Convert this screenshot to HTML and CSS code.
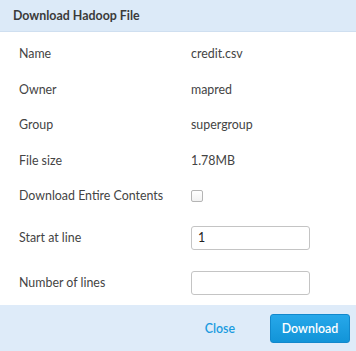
FILE: index.html
```html
<!DOCTYPE html>
<html lang="en">
<head>
  <meta charset="UTF-8"><title>Download Hadoop File</title>
  <link rel="stylesheet" href="styles.css">
</head>
<body>
  <div class="dialog">
    <header class="dlg-head">Download Hadoop File</header>

    <div class="dlg-body">
      <div class="row"><span class="label">Name</span><span class="value">credit.csv</span></div>
      <div class="row"><span class="label">Owner</span><span class="value">mapred</span></div>
      <div class="row"><span class="label">Group</span><span class="value">supergroup</span></div>
      <div class="row"><span class="label">File size</span><span class="value">1.78MB</span></div>
      <div class="row"><span class="label">Download Entire Contents</span><span class="value"><input type="checkbox" class="chk"></span></div>
      <div class="row row-input first-input"><span class="label">Start at line</span><input type="text" class="txt" value="1"></div>
      <div class="row row-input"><span class="label">Number of lines</span><input type="text" class="txt"></div>
    </div>

    <footer class="dlg-foot">
      <button class="btn-link">Close</button>
      <button class="btn-primary">Download</button>
    </footer>
  </div>
</body>
</html>
```

FILE: styles.css
```css
* { margin:0; padding:0; box-sizing:border-box; }
body { font-family:'Lato','Open Sans',sans-serif; background:#fff; color:#444; width:356px; height:351px; overflow:hidden; }

.dialog { width:356px; height:351px; display:flex; flex-direction:column; }

/* Header */
.dlg-head { height:32px; background:#dceaf8; border-bottom:1px solid #cfdff0; padding:0 13px;
  display:flex; align-items:center; font-weight:700; font-size:12.4px; color:#3a3a3a;
}

/* Rows */
.dlg-body { flex:1; padding:4px 0 0 19px; }
.row { display:flex; align-items:center; height:35.5px; font-size:12.4px; }
.row .label { width:172px; }
.row-input { height:45px; }
.first-input { margin-top:2px; }
.chk { -webkit-appearance:none; appearance:none; width:12px; height:12px; border:1px solid #b5b5b5;
  border-radius:2px; background:linear-gradient(#fff,#f2f2f2); display:block;
}
.txt { width:119px; height:24px; border:1px solid #c4c4c4; border-radius:3px; padding:0 6px;
  font:12.4px 'Lato',sans-serif; color:#222;
}

/* Footer */
.dlg-foot { height:46px; background:#deebf9; display:flex; align-items:center; justify-content:flex-end;
  padding:0 6px 0 0; gap:35px;
}
.btn-link { background:none; border:none; color:#1a9be0; font:600 12.4px 'Lato',sans-serif; cursor:pointer; }
.btn-primary { width:80px; height:29px; background:linear-gradient(#27a8ea,#1294d8); border:1px solid #1288cc;
  border-radius:3px; color:#fff; font:600 12.4px 'Lato',sans-serif; cursor:pointer;
}
```
